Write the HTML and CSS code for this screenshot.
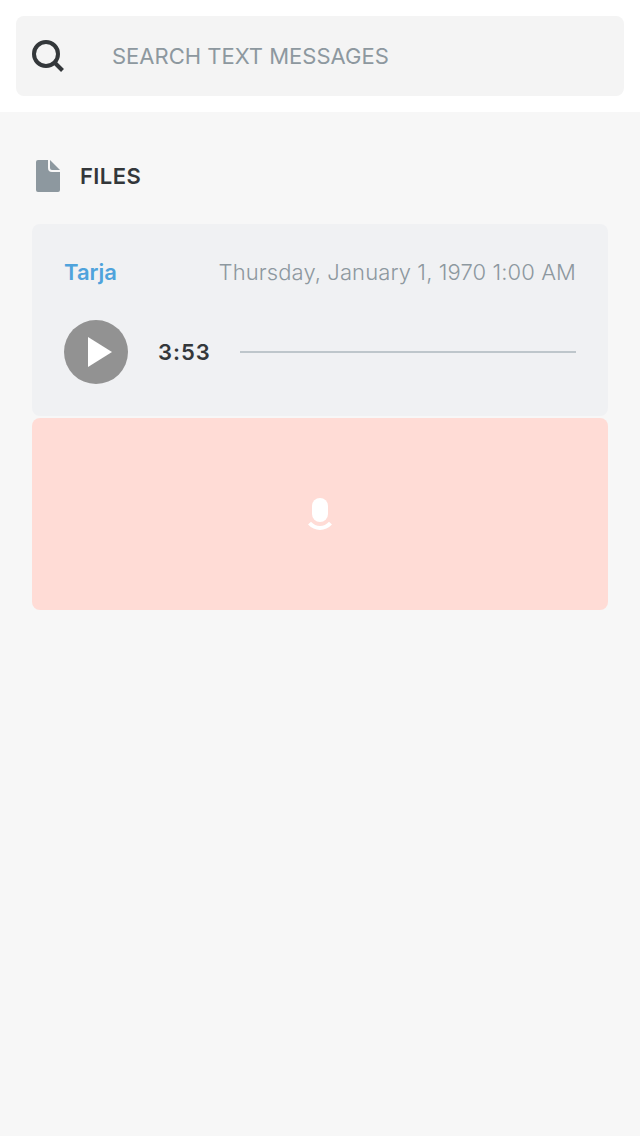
FILE: index.html
```html
<!DOCTYPE html>
<html lang="en">
<head>
<meta charset="utf-8">
<title>Files</title>
<link rel="stylesheet" href="styles.css">
</head>
<body>
<header class="topbar">
  <div class="search">
    <svg class="search-icon" width="32" height="32" viewBox="0 0 32 32"><circle cx="14" cy="14" r="12" fill="none" stroke="#33373a" stroke-width="4"/><path d="M22.5 22.5L30.5 30.5" stroke="#33373a" stroke-width="4"/></svg>
    <span class="search-label">SEARCH TEXT MESSAGES</span>
  </div>
</header>
<main class="content">
  <h1 class="section-title">
    <svg class="file-icon" width="32" height="32" viewBox="0 0 32 32" fill="#8d989f"><path d="M6 0H16V8Q16 12 20 12H28V30Q28 32 26 32H6Q4 32 4 30V2Q4 0 6 0Z"/><path d="M18 0L28 10H20Q18 10 18 8Z"/></svg>
    <span class="title-text">FILES</span>
  </h1>
  <div class="messages">
    <article class="card">
      <div class="meta">
        <span class="sender">Tarja</span>
        <time class="date">Thursday, January 1, 1970 1:00 AM</time>
      </div>
      <div class="player">
        <svg width="64" height="64" viewBox="0 0 64 64"><circle cx="32" cy="32" r="32" fill="#929292"/><path d="M24 17V47L48 32Z" fill="#fff"/></svg>
        <span class="duration">3:53</span>
        <div class="track"></div>
      </div>
    </article>
    <article class="card card-blocked">
      <svg width="32" height="32" viewBox="0 0 32 32"><rect x="8" y="0" width="16" height="24" rx="8" fill="#fff"/><path d="M5.5 25.2Q10 30 16 30T26.5 25.2" fill="none" stroke="#fff" stroke-width="4"/></svg>
    </article>
  </div>
</main>
</body>
</html>
```
FILE: styles.css
```css
* { box-sizing: border-box; }
body {
  margin: 0;
  min-height: 1136px;
  background: #f7f7f7;
  color: #33373a;
  font: 400 22px/32px Inter, "Liberation Sans", sans-serif;
  white-space: nowrap;
}
svg { display: block; flex: none; }
.topbar { height: 112px; padding: 16px; background: #fff; }
.search {
  display: flex;
  align-items: center;
  gap: 48px;
  height: 80px;
  padding: 0 16px;
  border-radius: 8px;
  background: #f4f4f4;
}
.search-label { color: #8d989f; }
.content { padding: 48px 32px 0; }
.section-title {
  display: flex;
  align-items: center;
  gap: 16px;
  height: 32px;
  margin: 0 0 32px;
  font-size: 22px;
  font-weight: 600;
}
.title-text { letter-spacing: 0.4px; }
.messages { display: flex; flex-direction: column; gap: 2px; }
.card { height: 192px; padding: 32px; border-radius: 8px; background: #f0f1f3; }
.meta { display: flex; justify-content: space-between; margin-bottom: 32px; }
.sender { color: #4fa3dc; font-weight: 600; }
.date { color: #8d989f; font-weight: 300; letter-spacing: 0.1px; }
.player { display: flex; align-items: center; height: 64px; }
.duration { width: 82px; margin-left: 30px; font-weight: 600; letter-spacing: 1px; }
.track { flex: 1; height: 2px; background: #bec6cb; }
.card-blocked {
  display: flex;
  align-items: center;
  justify-content: center;
  background: #ffdcd6;
}
```
